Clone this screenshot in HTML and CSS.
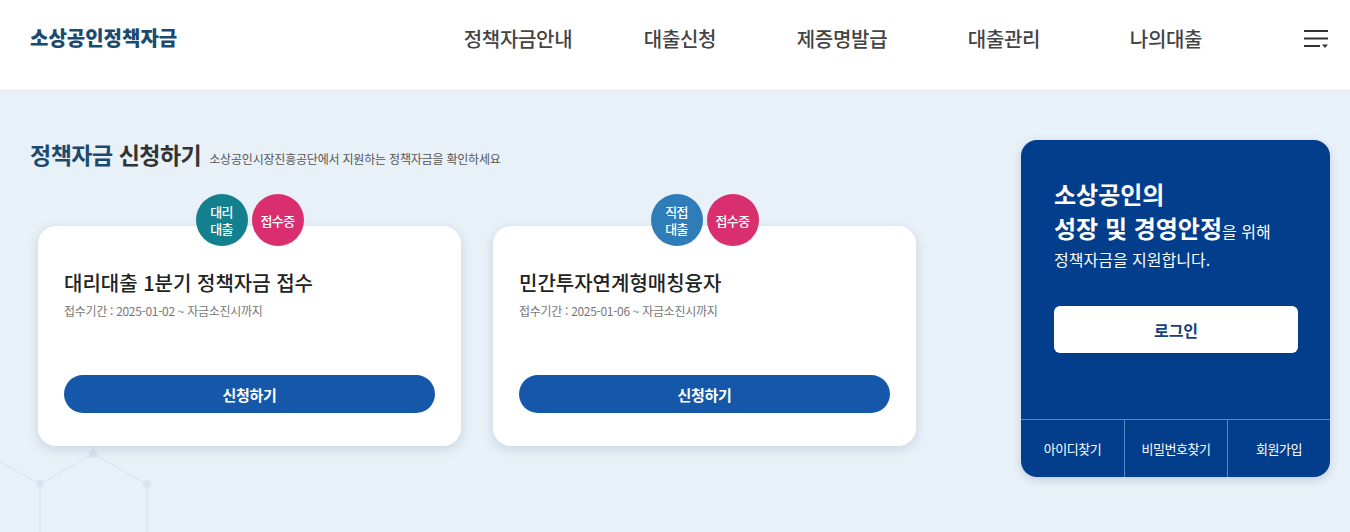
FILE: index.html
```html
<!DOCTYPE html>
<html lang="ko">
<head>
<meta charset="utf-8">
<title>소상공인정책자금</title>
<link rel="stylesheet" href="styles.css">
</head>
<body>
<header class="header">
  <div class="logo">소상공인정책자금</div>
  <nav class="gnb">
    <a class="gnb-item">정책자금안내</a>
    <a class="gnb-item">대출신청</a>
    <a class="gnb-item">제증명발급</a>
    <a class="gnb-item">대출관리</a>
    <a class="gnb-item">나의대출</a>
  </nav>
  <button class="menu-btn" aria-label="전체메뉴">
    <svg width="24" height="20" viewBox="0 0 24 20">
      <path d="M0 2H24M0 9.5H24M0 17H16" stroke="#333" stroke-width="2" fill="none"/>
      <path d="M18 15.5H24L21 19Z" fill="#333"/>
    </svg>
  </button>
</header>

<main class="main">
  <svg class="deco" width="220" height="102" viewBox="0 0 220 102">
    <g stroke="#dae5f0" stroke-width="1.3" fill="none">
      <path d="M0 32L40 54L93 24L147 54M40 54V102M147 54V102M93 24V0"/>
    </g>
    <g fill="#d8e4ef">
      <circle cx="40" cy="54" r="4"/>
      <circle cx="93" cy="24" r="4"/>
      <circle cx="147" cy="54" r="4"/>
    </g>
  </svg>

  <section class="apply">
    <h2 class="sec-title"><span class="accent">정책자금</span> 신청하기<small>소상공인시장진흥공단에서 지원하는 정책자금을 확인하세요</small></h2>
    <div class="cards">
      <article class="card">
        <div class="badges">
          <span class="badge teal">대리<br>대출</span>
          <span class="badge pink">접수중</span>
        </div>
        <h3 class="card-title">대리대출 1분기 정책자금 접수</h3>
        <p class="card-date">접수기간 : 2025-01-02 ~ 자금소진시까지</p>
        <a class="apply-btn">신청하기</a>
      </article>
      <article class="card">
        <div class="badges">
          <span class="badge blue">직접<br>대출</span>
          <span class="badge pink">접수중</span>
        </div>
        <h3 class="card-title">민간투자연계형매칭융자</h3>
        <p class="card-date">접수기간 : 2025-01-06 ~ 자금소진시까지</p>
        <a class="apply-btn">신청하기</a>
      </article>
    </div>
  </section>

  <aside class="login-box">
    <h2 class="login-title">소상공인의<br>성장 및 경영안정<span>을 위해</span></h2>
    <p class="login-desc">정책자금을 지원합니다.</p>
    <a class="login-btn">로그인</a>
    <ul class="login-links">
      <li>아이디찾기</li>
      <li>비밀번호찾기</li>
      <li>회원가입</li>
    </ul>
  </aside>
</main>
</body>
</html>
```

FILE: styles.css
```css
* { box-sizing: border-box; }
html, body {
  margin: 0;
  padding: 0;
  background: #e9f1f8;
}
body {
  font-family: "Noto Sans CJK KR", "Noto Sans", sans-serif;
  min-height: 532px;
  position: relative;
  overflow: hidden;
}
a { text-decoration: none; color: inherit; }

.header {
  display: flex;
  align-items: flex-start;
  height: 91px;
  padding: 24px 0 0 30px;
  background: #fff;
  border-bottom: 1px solid #e1e8ef;
}
.logo {
  width: 407px;
  font-size: 20px;
  line-height: 28px;
  font-weight: 900;
  letter-spacing: 0;
  color: #1c4a6e;
}
.gnb {
  display: flex;
  width: 810px;
}
.gnb-item {
  width: 162px;
  text-align: center;
  font-size: 20px;
  line-height: 30px;
  font-weight: 500;
  letter-spacing: -0.3px;
  color: #444;
}
.menu-btn {
  margin: 5px 0 0 57px;
  padding: 0;
  border: 0;
  background: none;
  width: 24px;
  height: 20px;
  display: block;
}
.menu-btn svg { display: block; }

.main {
  display: flex;
  justify-content: space-between;
  align-items: flex-start;
  padding: 48px 20px 0 30px;
  position: relative;
  min-height: 441px;
}
.deco {
  position: absolute;
  left: 0;
  top: 339px;
  z-index: 0;
}
.apply { position: relative; z-index: 1; }

.sec-title {
  margin: 0;
  height: 30px;
  font-size: 23px;
  line-height: 30px;
  font-weight: 700;
  letter-spacing: -0.5px;
  color: #333;
  display: flex;
  align-items: baseline;
}
.sec-title .accent { color: #1c4a6e; margin-right: 6px; }
.sec-title small {
  margin-left: 8px;
  font-size: 12px;
  font-weight: 400;
  letter-spacing: -0.2px;
  color: #555;
}

.cards {
  display: flex;
  gap: 32px;
  margin: 57px 0 0 8px;
}
.card {
  position: relative;
  width: 423px;
  height: 220px;
  padding: 42px 26px 0;
  background: #fff;
  border-radius: 18px;
  box-shadow: 0 3px 12px rgba(30, 60, 100, 0.16);
}
.badges {
  position: absolute;
  top: -32px;
  left: 50%;
  transform: translateX(-50%);
  display: flex;
  gap: 4px;
}
.badge {
  width: 52px;
  height: 52px;
  border-radius: 50%;
  display: flex;
  align-items: center;
  justify-content: center;
  text-align: center;
  color: #fff;
  font-size: 13px;
  line-height: 17px;
  font-weight: 500;
  letter-spacing: -0.6px;
}
.badge.teal { background: #13808e; }
.badge.blue { background: #2f7db8; }
.badge.pink { background: #da2f6f; }

.card-title {
  margin: 0;
  font-size: 20px;
  line-height: 30px;
  font-weight: 500;
  letter-spacing: 0;
  color: #222;
}
.card-date {
  margin: 4px 0 0;
  font-size: 12px;
  line-height: 18px;
  letter-spacing: -0.3px;
  color: #777;
}
.apply-btn {
  display: flex;
  align-items: center;
  justify-content: center;
  margin-top: 55px;
  height: 38px;
  border-radius: 19px;
  background: #1557a9;
  color: #fff;
  font-size: 15px;
  font-weight: 700;
  letter-spacing: -0.3px;
}

.login-box {
  position: relative;
  z-index: 1;
  margin-top: 1px;
  width: 309px;
  height: 337px;
  display: flex;
  flex-direction: column;
  padding-top: 37px;
  background: #023e8b;
  border-radius: 16px;
  box-shadow: 0 3px 10px rgba(20, 50, 100, 0.18);
  color: #fff;
  overflow: hidden;
}
.login-title {
  margin: 0 0 0 33px;
  font-size: 24px;
  line-height: 34px;
  font-weight: 700;
  letter-spacing: 0;
}
.login-title span {
  font-size: 16px;
  font-weight: 400;
  letter-spacing: 0;
}
.login-desc {
  margin: 0 0 0 33px;
  font-size: 16px;
  line-height: 22px;
  letter-spacing: 0;
}
.login-btn {
  flex: none;
  margin: 36px 32px 0 33px;
  height: 47px;
  border-radius: 6px;
  background: #fff;
  color: #153f7c;
  display: flex;
  align-items: center;
  justify-content: center;
  font-size: 16px;
  font-weight: 700;
}
.login-links {
  flex: none;
  list-style: none;
  margin: auto 0 0;
  padding: 0;
  display: grid;
  grid-template-columns: 103px 103px 103px;
  height: 58px;
  border-top: 1px solid #5a86c3;
}
.login-links li {
  display: flex;
  align-items: center;
  justify-content: center;
  font-size: 13px;
  letter-spacing: -0.5px;
}
.login-links li + li { border-left: 1px solid #5a86c3; }
```
